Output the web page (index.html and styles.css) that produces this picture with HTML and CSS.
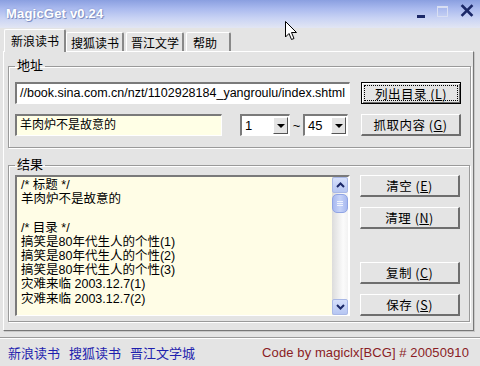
FILE: index.html
```html
<!DOCTYPE html>
<html lang="zh-CN">
<head>
  <meta charset="UTF-8" />
  <title>MagicGet v0.24</title>
  <link rel="stylesheet" href="styles.css">
</head>
<body>
  <div class="window">
    <!-- title bar -->
    <div class="titlebar">
      <span class="title">MagicGet v0.24</span>
      <div class="controls">
        <span class="ctl-min"></span>
        <span class="ctl-max"></span>
        <svg class="ctl-close" width="14" height="13" viewBox="0 0 14 13">
          <path d="M2.5 2 L11.5 11 M11.5 2 L2.5 11" stroke="#1b2868" stroke-width="2.6" stroke-linecap="square" />
        </svg>
      </div>
    </div>

    <!-- tabs -->
    <div class="tabs">
      <div class="tab active">新浪读书</div>
      <div class="tab">搜狐读书</div>
      <div class="tab">晋江文学</div>
      <div class="tab help">帮助</div>
    </div>

    <div class="panel">
      <fieldset class="group group-addr">
        <legend>地址</legend>
        <div class="row">
          <div class="field url">//book.sina.com.cn/nzt/1102928184_yangroulu/index.shtml</div>
          <button class="btn focused"><span class="focus-ring">列出目录 (<u>L</u>)</span></button>
        </div>
        <div class="row">
          <div class="field name">羊肉炉不是故意的</div>
          <div class="combo first">
            <span class="combo-val">1</span>
            <span class="combo-arrow"></span>
          </div>
          <span class="tilde">~</span>
          <div class="combo last">
            <span class="combo-val">45</span>
            <span class="combo-arrow"></span>
          </div>
          <button class="btn">抓取内容 (<u>G</u>)</button>
        </div>
      </fieldset>

      <fieldset class="group group-result">
        <legend>结果</legend>
        <div class="result-row">
          <div class="memo">
            <div class="memo-text">
              <div>/* 标题 */</div>
              <div>羊肉炉不是故意的</div>
              <div>&nbsp;</div>
              <div>/* 目录 */</div>
              <div>搞笑是80年代生人的个性(1)</div>
              <div>搞笑是80年代生人的个性(2)</div>
              <div>搞笑是80年代生人的个性(3)</div>
              <div>灾难来临 2003.12.7(1)</div>
              <div>灾难来临 2003.12.7(2)</div>
            </div>
            <div class="scrollbar">
              <span class="sb-btn">
                <svg width="9" height="6" viewBox="0 0 9 6"><path d="M1 5 L4.5 1.5 L8 5" fill="none" stroke="#1b2868" stroke-width="2" /></svg>
              </span>
              <span class="sb-thumb"><i></i><i></i><i></i></span>
              <span class="sb-track"></span>
              <span class="sb-btn">
                <svg width="9" height="6" viewBox="0 0 9 6"><path d="M1 1 L4.5 4.5 L8 1" fill="none" stroke="#1b2868" stroke-width="2" /></svg>
              </span>
            </div>
          </div>
          <div class="side-buttons">
            <button class="btn">清空 (<u>E</u>)</button>
            <button class="btn">清理 (<u>N</u>)</button>
            <span class="spacer"></span>
            <button class="btn">复制 (<u>C</u>)</button>
            <button class="btn">保存 (<u>S</u>)</button>
          </div>
        </div>
      </fieldset>
    </div>

    <div class="statusbar">
      <div class="links">
        <a href="#">新浪读书</a>
        <a href="#">搜狐读书</a>
        <a href="#">晋江文学城</a>
      </div>
      <div class="credit">Code by magiclx[BCG] # 20050910</div>
    </div>

    <!-- mouse pointer over the window -->
    <svg class="cursor" width="13" height="20" viewBox="0 0 13 20">
      <path d="M0.5 0.5 L0.5 16 L4 12.5 L6.5 18.5 L9 17.5 L6.5 11.5 L11.5 11.5 Z" fill="#fff" stroke="#000" stroke-width="1" stroke-linejoin="miter" />
    </svg>
  </div>
</body>
</html>
```

FILE: styles.css
```css
* {
  box-sizing: border-box;
}

body {
  margin: 0;
  padding: 0;
  background-color: #e4e4e4;
  font-family: 'Liberation Sans', 'Noto Sans CJK SC', sans-serif;
  font-size: 12px;
  color: #000;
}

.window {
  position: relative;
  width: 480px;
  height: 366px;
  overflow: hidden;
  background-color: #e4e4e4;
}

/* title bar */
.titlebar {
  height: 28px;
  display: flex;
  align-items: center;
  justify-content: space-between;
  padding: 0 6px 2px 6px;
  background: linear-gradient(#8a9fe0, #a9b9ee 30%, #c9d3f4 65%, #e2e6f3);
}

.title {
  color: #fff;
  font-weight: bold;
  font-size: 13px;
  letter-spacing: 0.2px;
  text-shadow: 1px 1px 0 #8090c4, 0 0 2px #7d8dc2;
}

.controls {
  display: flex;
  align-items: center;
  gap: 12px;
}

.ctl-min {
  width: 8px;
  height: 3px;
  margin-top: 6px;
  background-color: #1b2868;
}

.ctl-max {
  width: 11px;
  height: 11px;
  border: 1px solid #d8def2;
  border-top-width: 2px;
  margin-top: -4px;
}

.ctl-close {
  margin-top: -6px;
}

/* tabs */
.tabs {
  display: flex;
  align-items: flex-end;
  height: 23px;
  padding-left: 4px;
  position: relative;
  z-index: 1;
}

.tab {
  height: 19px;
  padding: 0 3px 0 4px;
  font-family: 'Noto Sans CJK SC', sans-serif;
  font-size: 12px;
  line-height: 19px;
  background-color: #e4e4e4;
  border-top: 1px solid #fff;
  border-left: 1px solid #fff;
  border-right: 2px solid #888;
  margin-right: 2px;
  border-radius: 2px 2px 0 0;
}

.tab.active {
  height: 23px;
  line-height: 22px;
  padding: 0 5px 0 6px;
  margin-right: 0;
  margin-bottom: -1px;
}

.tab.help {
  padding: 0 12px 0 6px;
}

.panel {
  height: 280px;
  margin: 0 6px 0 3px;
  padding: 0 3px 0 4px;
  border-top: 1px solid #fff;
  border-left: 1px solid #fff;
  border-right: 1px solid #777;
  border-bottom: 1px solid #777;
  box-shadow: 1px 1px 0 #c8c8c8;
}

/* group boxes */
.group {
  margin: 0;
  border: 1px solid #9a9a9a;
  box-shadow: inset 1px 1px 0 #fff, 1px 1px 0 #fff;
  padding: 0 9px 0 6px;
}

.group legend {
  font-size: 13px;
  line-height: 14px;
  padding: 0 2px;
}

.group-addr {
  margin-top: 7px;
  padding-top: 9px;
  padding-bottom: 11px;
}

.group-result {
  margin-top: 10px;
  padding-top: 3px;
  padding-bottom: 5px;
}

.row {
  display: flex;
  align-items: center;
  height: 22px;
}

.row + .row {
  margin-top: 10px;
}

.field {
  height: 22px;
  padding: 0 3px;
  line-height: 18px;
  font-size: 12.5px;
  white-space: nowrap;
  overflow: hidden;
  border-top: 2px solid #7a7a7a;
  border-left: 2px solid #7a7a7a;
  border-bottom: 1px solid #fff;
  border-right: 1px solid #fff;
  background-color: #fff;
}

.field.url {
  width: 335px;
  margin-right: 10px;
}

.field.name {
  width: 207px;
  margin-right: 18px;
  background-color: #ffffe6;
  font-size: 12px;
  line-height: 19px;
}

.combo {
  display: flex;
  align-items: center;
  height: 22px;
  padding: 1px;
  border-top: 2px solid #7a7a7a;
  border-left: 2px solid #7a7a7a;
  border-bottom: 1px solid #fff;
  border-right: 1px solid #fff;
  background-color: #fff;
}

.combo.first {
  width: 50px;
}

.combo.last {
  width: 45px;
  margin-right: 13px;
}

.combo-val {
  flex: 1;
  padding-left: 2px;
  font-size: 13px;
}

.combo-arrow {
  width: 15px;
  height: 17px;
  background-color: #e4e4e4;
  border-top: 1px solid #fff;
  border-left: 1px solid #fff;
  border-right: 1px solid #555;
  border-bottom: 1px solid #555;
  position: relative;
}

.combo-arrow::after {
  content: '';
  position: absolute;
  left: 3px;
  top: 6px;
  border-left: 4px solid transparent;
  border-right: 4px solid transparent;
  border-top: 4px solid #000;
}

.tilde {
  width: 13px;
  text-align: center;
  font-size: 13px;
}

.btn {
  width: 100px;
  height: 22px;
  padding: 0;
  margin-left: auto;
  font-family: 'Noto Sans CJK SC', 'Liberation Sans', sans-serif;
  font-size: 12.5px;
  letter-spacing: 0.5px;
  background-color: #e4e4e4;
  border-top: 1px solid #fff;
  border-left: 1px solid #fff;
  border-right: 2px solid #6e6e6e;
  border-bottom: 2px solid #6e6e6e;
  color: #000;
}

.btn.focused {
  border: 1px solid #000;
  box-shadow: inset 1px 1px 0 #fff, inset -1px -1px 0 #6e6e6e;
  padding: 2px;
}

.focus-ring {
  display: block;
  height: 100%;
  line-height: 15px;
  border: 1px dotted #000;
}

/* result */
.result-row {
  display: flex;
  height: 141px;
}

.memo {
  width: 335px;
  display: flex;
  border-top: 2px solid #7a7a7a;
  border-left: 2px solid #7a7a7a;
  border-bottom: 1px solid #fff;
  border-right: 2px solid #fff;
  background-color: #fffde6;
}

.memo-text {
  flex: 1;
  padding: 1px 4px;
  font-size: 12.5px;
  line-height: 14.2px;
  white-space: nowrap;
  overflow: hidden;
}

.scrollbar {
  width: 16px;
  display: flex;
  flex-direction: column;
  background: linear-gradient(90deg, #dcdcdc, #fbfbfb 70%, #f2f2f2);
}

.sb-btn {
  height: 16px;
  display: flex;
  align-items: center;
  justify-content: center;
  background: linear-gradient(#d6e0fb, #b6c6f2);
  border: 1px solid #a9b8e6;
  border-radius: 2px;
}

.sb-thumb {
  height: 19px;
  margin: 1px 0 0 0;
  display: flex;
  flex-direction: column;
  align-items: center;
  justify-content: center;
  gap: 1px;
  background: linear-gradient(90deg, #a8b9f0, #c6d3f8 50%, #a8b9f0);
  border: 1px solid #90a4e4;
  border-radius: 5px;
}

.sb-thumb i {
  display: block;
  width: 6px;
  height: 1px;
  background-color: #eef2fe;
}

.sb-track {
  flex: 1;
}

.side-buttons {
  flex: 1;
  display: flex;
  flex-direction: column;
  align-items: flex-end;
  gap: 10px;
}

.side-buttons .btn {
  margin-left: 0;
}

.spacer {
  flex: 1;
}

/* status bar */
.statusbar {
  margin-top: 6px;
  border-top: 1px solid #9a9a9a;
  box-shadow: inset 0 1px 0 #fff;
  height: 30px;
  display: flex;
  align-items: center;
  justify-content: space-between;
  padding: 0 11px 0 8px;
}

.links {
  display: flex;
  gap: 9px;
}

.links a {
  color: #1f1fae;
  text-decoration: none;
  font-size: 13px;
}

.credit {
  color: #8a1c24;
  font-size: 13px;
  letter-spacing: 0.1px;
}

.cursor {
  position: absolute;
  left: 285px;
  top: 21px;
}
```
